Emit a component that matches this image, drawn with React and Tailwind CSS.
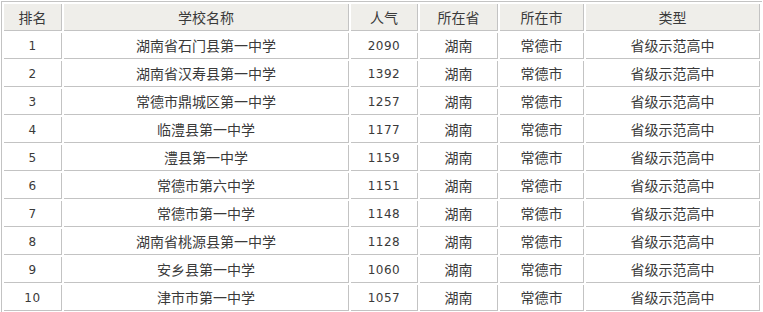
const rows = [
  [1, "湖南省石门县第一中学", 2090],
  [2, "湖南省汉寿县第一中学", 1392],
  [3, "常德市鼎城区第一中学", 1257],
  [4, "临澧县第一中学", 1177],
  [5, "澧县第一中学", 1159],
  [6, "常德市第六中学", 1151],
  [7, "常德市第一中学", 1148],
  [8, "湖南省桃源县第一中学", 1128],
  [9, "安乡县第一中学", 1060],
  [10, "津市市第一中学", 1057],
];

const cjk = "font-['Noto_Sans_CJK_SC',sans-serif] text-[14px] font-light";
const num = "font-['DejaVu_Sans',sans-serif] text-[12px] tracking-[0.5px]";
const cell = "border-r border-b border-[#c3c3c3] text-center p-0 font-normal";

export default function App() {
  return (
    <div className="bg-white w-[763px] h-[312px] pl-px pt-px text-[#3a3a3a]">
      <table className="border-separate border-spacing-[2px] border-t border-l border-[#c3c3c3] w-[761px] table-fixed">
        <colgroup>
          <col className="w-[58px]" />
          <col className="w-[285px]" />
          <col className="w-[67px]" />
          <col className="w-[78px]" />
          <col className="w-[84px]" />
          <col />
        </colgroup>
        <thead>
          <tr className="h-[27px] bg-[#efeeea]">
            <th className={`${cell} ${cjk}`}>排名</th>
            <th className={`${cell} ${cjk}`}>学校名称</th>
            <th className={`${cell} ${cjk}`}>人气</th>
            <th className={`${cell} ${cjk}`}>所在省</th>
            <th className={`${cell} ${cjk}`}>所在市</th>
            <th className={`${cell} ${cjk}`}>类型</th>
          </tr>
        </thead>
        <tbody>
          {rows.map(([rank, name, hot]) => (
            <tr key={rank} className="h-[26px]">
              <td className={`${cell} ${num}`}>{rank}</td>
              <td className={`${cell} ${cjk}`}>{name}</td>
              <td className={`${cell} ${num}`}>{hot}</td>
              <td className={`${cell} ${cjk}`}>湖南</td>
              <td className={`${cell} ${cjk}`}>常德市</td>
              <td className={`${cell} ${cjk}`}>省级示范高中</td>
            </tr>
          ))}
        </tbody>
      </table>
    </div>
  );
}
